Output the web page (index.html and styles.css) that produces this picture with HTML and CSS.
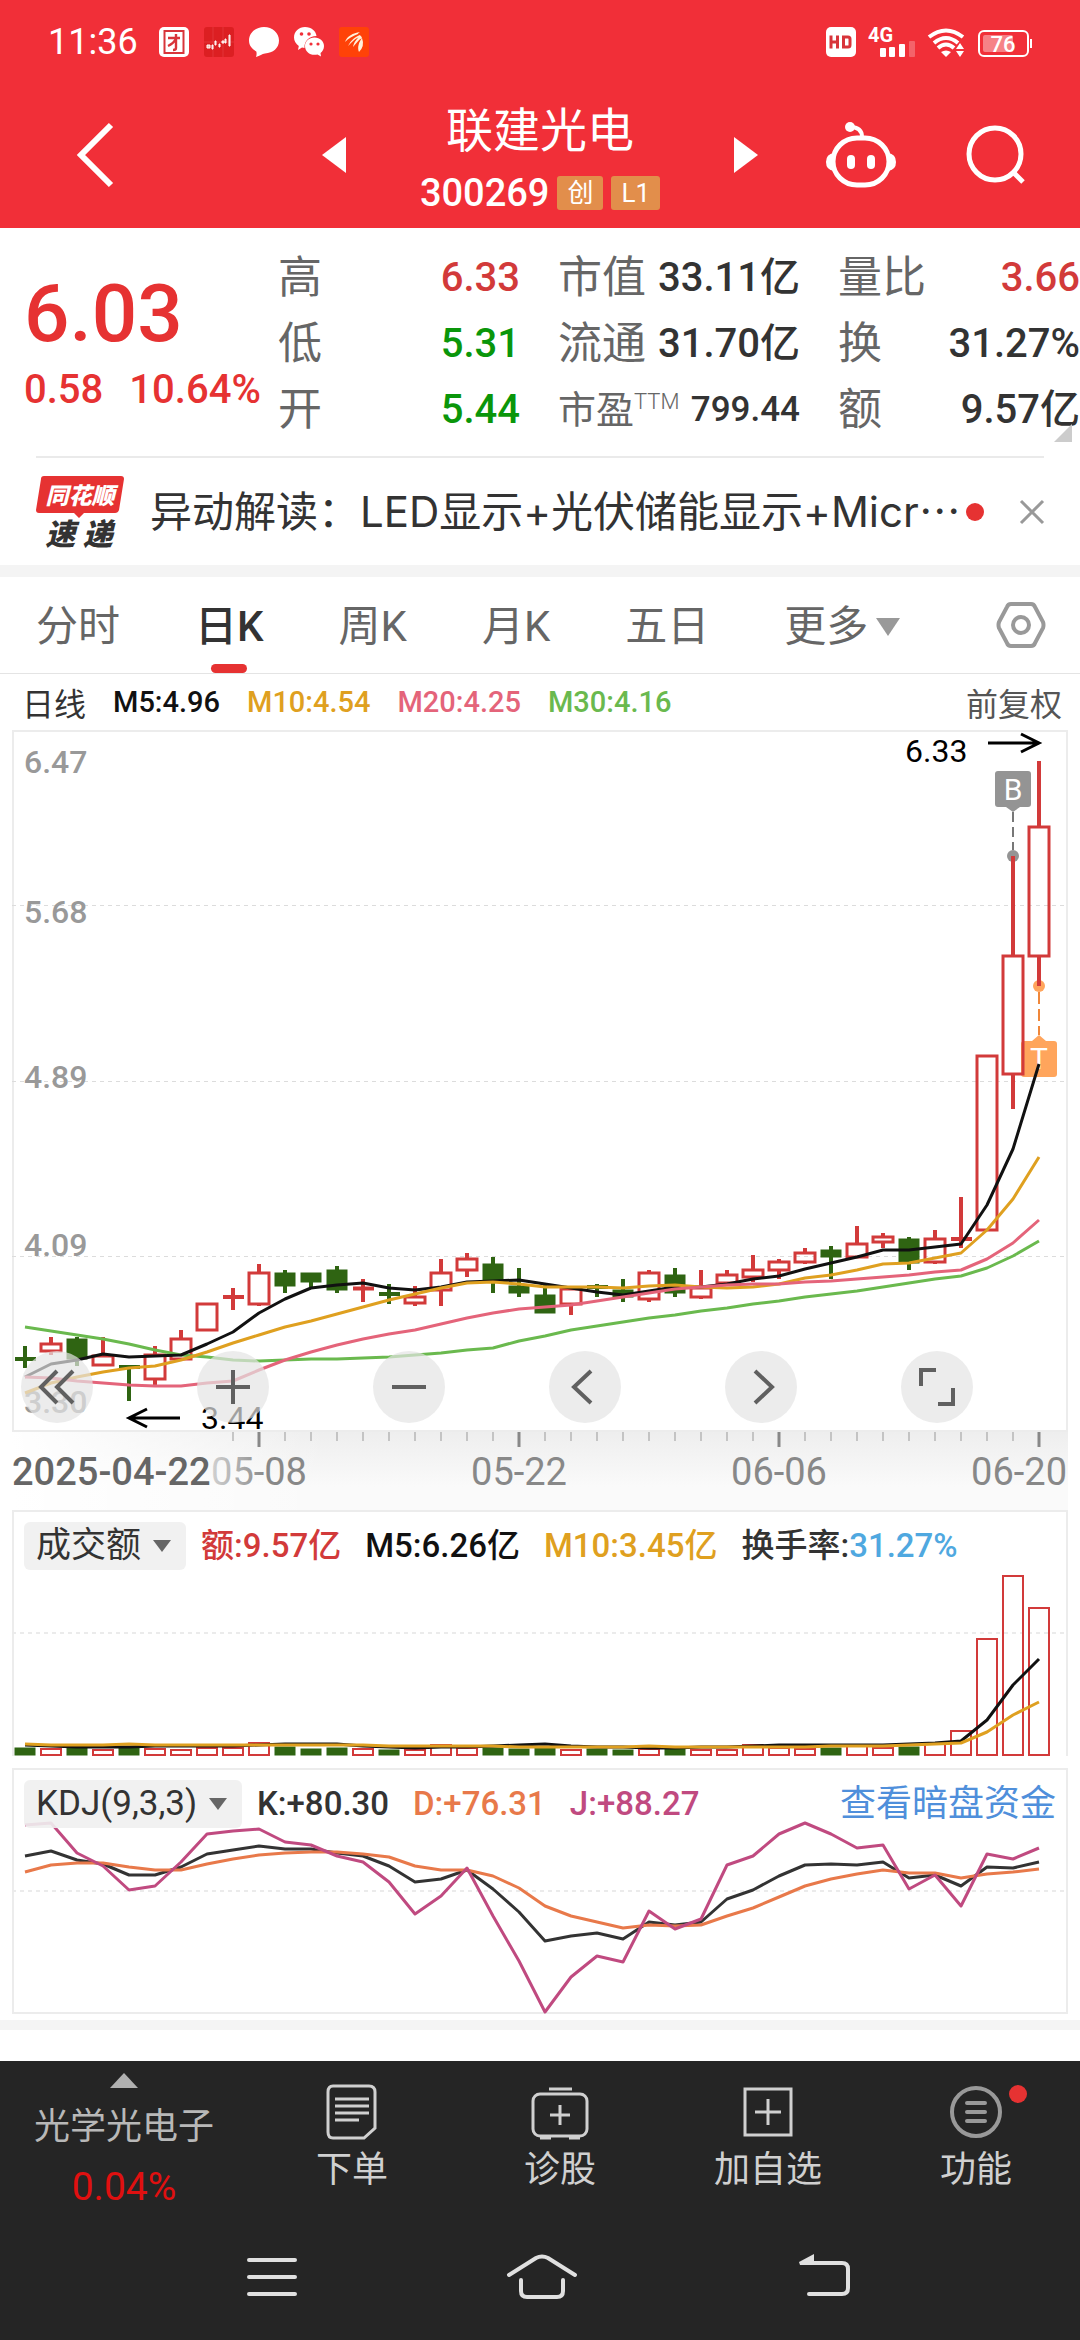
FILE: index.html
```html
<!DOCTYPE html>
<html lang="zh-CN">
<head>
  <meta charset="UTF-8">
  <meta name="viewport" content="width=device-width, initial-scale=1.0">
  <title>联建光电 300269</title>
  <link rel="stylesheet" href="styles.css">
</head>
<body>

  <header class="header">
    <div class="status-bar">
      <span class="clock">11:36</span>
      <svg class="status-icon" viewBox="0 0 30 30">
        <rect width="30" height="30" rx="5" fill="#fff"/>
        <rect x="5.500" y="4" width="19" height="22" fill="none" stroke="#d8343a" stroke-width="2"/>
        <path d="M9 11h12M17 7v14q0 2-3 2M17 12q-3 5-8 7" fill="none" stroke="#d8343a" stroke-width="2.400"/>
      </svg>
      <svg class="status-icon" viewBox="0 0 30 30">
        <rect width="30" height="30" rx="3" fill="#dc1f22"/>
        <path d="M9 0v30M19 0v30M0 15h30" stroke="#e23438" stroke-width="1"/>
        <path d="M3 18h3v3H3zM8 18h1v4H8zM11 14h1v4h-1zM15 17h1v3h-1zM18 14h2v2h-2zM21 12h1v4h-1zM25 8h1v11h-1z" fill="#f3b9a8" stroke="#fff" stroke-width="1"/>
      </svg>
      <svg class="status-icon" viewBox="0 0 30 30">
        <path d="M15 0c8.500 0 15 6 15 13.500S24 26 16 26.500c-3 .5-5 2-9 3.500.8-2 .7-4 .3-5.500C3 22 0 18.500 0 13.500 0 6 6.500 0 15 0z" fill="#fff"/>
      </svg>
      <svg class="status-icon" viewBox="0 0 30 30">
        <path d="M11 0c6.500 0 11 4 11.500 9C15 9 10 14 10.500 21L8 20.500 4 23l.8-4C2 17 0 14 0 10.500 0 4.500 5 0 11 0z" fill="#fff"/>
        <path d="M20.500 10.500c5.500 0 9.500 4 9.500 8.500 0 3-1.500 5.500-3.500 7l.5 3.500-3.500-2c-7 1.500-12.500-2.500-12.500-8.500 0-4.500 4-8.500 9.500-8.500z" fill="#fff"/>
        <g fill="#f12f38"><circle cx="7.500" cy="7" r="1.800"/><circle cx="15" cy="7" r="1.800"/><circle cx="17" cy="17" r="1.600"/><circle cx="24" cy="17" r="1.600"/></g>
      </svg>
      <svg class="status-icon" viewBox="0 0 30 30">
        <rect width="30" height="30" rx="3" fill="#ff4208"/>
        <path d="M6 15C8 9 14 6 21 5q-2 1-2 2c-5 2-9 4-13 8zM9 19c3-6 7-9 12-11q1 1 .5 2c-6 1-8 5-12.500 9zM14 20c1-5 4-9 8-11l1 2c-4 2-6 6-9 9zM20 25c-2-5 0-10 3-14q3 8-3 14z" fill="#fff3dc"/>
      </svg>
      <div class="status-right">
        <svg class="status-icon" viewBox="0 0 30 30">
          <rect width="30" height="30" rx="5" fill="#fff"/>
          <path d="M5 8.500v13M11.500 8.500v13M5 15h6.500M17.500 10v10h4.500q2 0 2-2v-6q0-2-2-2z" fill="none" stroke="#d8343a" stroke-width="3"/>
        </svg>
        <svg class="signal-icon" viewBox="0 0 48 30">
          <text class="signal-text" x="0" y="15">4G</text>
          <g fill="#fff"><rect x="12" y="21" width="6" height="9" rx="1"/><rect x="21" y="20" width="6" height="10" rx="1"/><rect x="31" y="17" width="6" height="13" rx="1"/></g>
          <rect x="41" y="14" width="6" height="16" rx="1" fill="#fff" opacity=".25"/>
        </svg>
        <svg class="wifi-icon" viewBox="0 0 38 30">
          <g fill="none" stroke="#fff" stroke-width="4"><path d="M1 10Q18 -3 35 10"/><path d="M6 16Q18 6 30 16"/><path d="M10 21Q18 14 26 21"/></g>
          <path d="M13 25q5-3 10 0l-5 5z" fill="#fff"/>
          <path d="M28 22l4-6 4 6zM28 24h8l-4 6z" fill="#fff"/>
        </svg>
        <svg class="battery-icon" viewBox="0 0 54 30">
          <rect x="1" y="4" width="49" height="25" rx="5" fill="none" stroke="#fff" stroke-width="2"/>
          <rect x="5" y="8" width="30" height="17" rx="2" fill="#fff" opacity=".4"/>
          <rect x="52" y="12" width="2" height="9" fill="#fff"/>
          <text class="battery-text" x="25" y="25">76</text>
        </svg>
      </div>
    </div>

    <nav class="title-bar">
      <div class="title-left">
        <button class="icon-btn" aria-label="返回">
          <svg width="38" height="66" viewBox="0 0 38 66"><path d="M36 3L6 33l30 30" fill="none" stroke="#fff" stroke-width="6"/></svg>
        </button>
      </div>
      <div class="stock">
        <button class="icon-btn" aria-label="上一只">
          <svg width="24" height="36" viewBox="0 0 24 36"><path d="M24 0v36L0 18z" fill="#fff"/></svg>
        </button>
        <div class="stock-title">
          <h1 class="stock-name">联建光电</h1>
          <div class="stock-code">300269 <span class="tag">创</span><span class="tag">L1</span></div>
        </div>
        <button class="icon-btn" aria-label="下一只">
          <svg width="24" height="36" viewBox="0 0 24 36"><path d="M0 0v36L24 18z" fill="#fff"/></svg>
        </button>
      </div>
      <div class="title-right">
        <button class="icon-btn" aria-label="助手">
          <svg width="70" height="66" viewBox="0 0 70 66">
            <rect x="7" y="16" width="56" height="47" rx="24" fill="none" stroke="#fff" stroke-width="5"/>
            <path d="M36 15C36 8 32 5 24 5" fill="none" stroke="#fff" stroke-width="4"/>
            <circle cx="24" cy="5" r="5" fill="#fff"/>
            <path d="M8 31q-8 1-8 9t8 9zM62 31q8 1 8 9t-8 9z" fill="#fff"/>
            <rect x="21" y="33" width="8" height="14" rx="4" fill="#fff"/><rect x="41" y="33" width="8" height="14" rx="4" fill="#fff"/>
          </svg>
        </button>
        <button class="icon-btn" aria-label="搜索">
          <svg width="60" height="60" viewBox="0 0 60 60"><circle cx="29" cy="29" r="26" fill="none" stroke="#fff" stroke-width="5"/><path d="M47 47l10 10" stroke="#fff" stroke-width="5"/></svg>
        </button>
      </div>
    </nav>
  </header>

  <main class="content">
    <section class="quote">
      <div class="price-block">
        <div class="price">6.03</div>
        <div class="change"><span>0.58</span><span>10.64%</span></div>
      </div>
      <dl class="stats">
        <div><dt>高</dt><dd class="up">6.33</dd></div>
        <div><dt>市值</dt><dd>33.11亿</dd></div>
        <div><dt>量比</dt><dd class="up">3.66</dd></div>
        <div><dt>低</dt><dd class="down">5.31</dd></div>
        <div><dt>流通</dt><dd>31.70亿</dd></div>
        <div><dt>换</dt><dd>31.27%</dd></div>
        <div><dt>开</dt><dd class="down">5.44</dd></div>
        <div class="small"><dt>市盈<sup>TTM</sup></dt><dd>799.44</dd></div>
        <div><dt>额</dt><dd>9.57亿</dd></div>
      </dl>
      <span class="corner"></span>
    </section>

    <section class="news">
      <svg class="news-logo" viewBox="0 0 88 74">
        <path d="M8 1h77q3 0 3 3l-5 31q-1 3-4 3H48l-5 5-5-5H3q-3 0-3-3L5 4q0-3 3-3z" fill="#e63232"/>
        <text class="logo-top" x="44" y="29">同花顺</text>
        <text class="logo-bottom" x="43" y="70">速 递</text>
      </svg>
      <a class="news-text" href="#">异动解读：LED显示+光伏储能显示+Micr⋯</a>
      <span class="red-dot"></span>
      <button class="icon-btn news-close" aria-label="关闭">
        <svg width="24" height="24" viewBox="0 0 24 24"><path d="M1 1l22 22M23 1L1 23" stroke="#999" stroke-width="3"/></svg>
      </button>
    </section>

    <nav class="tabs">
      <button class="tab">分时</button>
      <button class="tab active">日K</button>
      <button class="tab">周K</button>
      <button class="tab">月K</button>
      <button class="tab">五日</button>
      <button class="tab more">更多</button>
      <button class="icon-btn settings" aria-label="设置">
        <svg width="50" height="46" viewBox="0 0 50 46"><path d="M15 2h20q3 0 4 3l8 15q1 3 0 6l-8 15q-1 3-4 3H15q-3 0-4-3L3 26q-1-3 0-6l8-15q1-3 4-3z" fill="none" stroke="#999" stroke-width="4"/><circle cx="25" cy="23" r="8" fill="none" stroke="#999" stroke-width="4"/></svg>
      </button>
    </nav>

    <div class="ma-row">
      <span class="ma-title">日线</span>
      <span class="m5">M5:4.96</span>
      <span class="m10">M10:4.54</span>
      <span class="m20">M20:4.25</span>
      <span class="m30">M30:4.16</span>
      <button class="adjust">前复权</button>
    </div>

    <section class="charts">
      <div class="kline">
        <svg class="chart" viewBox="0 0 1056 702">
          <rect class="frame" x="1" y="1" width="1054" height="700"/>
          <path class="grid-line" d="M0 175.500H1056M0 351.500H1056M0 526.500H1056"/>
          <g class="y-label">
            <text x="12" y="43">6.47</text>
            <text x="12" y="193">5.68</text>
            <text x="12" y="358">4.89</text>
            <text x="12" y="526">4.09</text>
            <text x="12" y="683">3.30</text>
          </g>
          <!-- buy / trade markers -->
          <g>
            <path d="M1001 82v38" stroke="#777" stroke-width="2" stroke-dasharray="10 5"/>
            <circle cx="1001" cy="126" r="6" fill="#949494"/>
            <path d="M986 41h30q3 0 3 3v30q0 3-3 3h-8l-7 5-7-5h-8q-3 0-3-3V44q0-3 3-3z" fill="#949494"/>
            <text class="marker" x="1001" y="70">B</text>
            <path d="M1027 262v43" stroke="#f0873a" stroke-width="2" stroke-dasharray="12 5"/>
            <circle cx="1027" cy="256" r="6" fill="#ffa55c"/>
            <path d="M1012 311h8l7-6 7 6h8q3 0 3 3v30q0 3-3 3h-30q-3 0-3-3v-30q0-3 3-3z" fill="#ffa55c"/>
            <text class="marker" x="1027" y="339">T</text>
          </g>
          <g id="candles"></g>
          <g id="ma-lines"></g>
          <g class="note">
            <text x="893" y="32">6.33</text>
            <text x="189" y="699">3.44</text>
            <path d="M976 13h50M1009 4l18 9-18 9M168 688h-50M135 679l-18 9 18 9"/>
          </g>
        </svg>
        <div class="tools">
          <button class="tool" aria-label="最早"><svg viewBox="0 0 36 36"><path d="M18 2L2 18l16 16M34 2L18 18l16 16"/></svg></button>
          <button class="tool" aria-label="放大"><svg viewBox="0 0 36 36"><path d="M1 18h34M18 1v34"/></svg></button>
          <button class="tool" aria-label="缩小"><svg viewBox="0 0 36 36"><path d="M1 18h34"/></svg></button>
          <button class="tool" aria-label="左移"><svg viewBox="0 0 36 36"><path d="M24 2L7 18l17 16"/></svg></button>
          <button class="tool" aria-label="右移"><svg viewBox="0 0 36 36"><path d="M12 2l17 16-17 16"/></svg></button>
          <button class="tool" aria-label="全屏"><svg viewBox="0 0 36 36"><path d="M2 17V1h15M34 19v16H19"/></svg></button>
        </div>
      </div>

      <svg class="chart axis" viewBox="0 0 1056 78">
        <defs>
          <linearGradient id="fade" gradientUnits="userSpaceOnUse" x1="190" y1="0" x2="255" y2="0">
            <stop offset="0" stop-color="#ddd"/><stop offset="1" stop-color="#888"/>
          </linearGradient>
        </defs>
        <g id="ticks"></g>
        <text class="date first" x="0" y="53">2025-04-22</text>
        <text class="date mid faded" x="247" y="53">05-08</text>
        <text class="date mid" x="507" y="53">05-22</text>
        <text class="date mid" x="767" y="53">06-06</text>
        <text class="date end" x="1055" y="53">06-20</text>
      </svg>

      <div class="panel">
        <svg class="chart" viewBox="0 0 1056 246">
          <path class="frame" d="M1 246V1h1054v245"/>
          <path class="grid-line soft" d="M0 123H1056"/>
          <g id="volumes"></g>
          <g id="volume-lines"></g>
        </svg>
        <div class="panel-head">
          <label class="picker"><select aria-label="指标"><option>成交额</option></select></label>
          <span class="up">额:9.57亿</span>
          <span class="m5">M5:6.26亿</span>
          <span class="m10">M10:3.45亿</span>
          <span class="dark">换手率:<span class="blue">31.27%</span></span>
        </div>
      </div>

      <div class="panel kdj">
        <svg class="chart" viewBox="0 0 1056 246">
          <rect class="frame" x="1" y="1" width="1054" height="244"/>
          <path class="grid-line soft" d="M0 123H1056"/>
          <g id="kdj-lines"></g>
        </svg>
        <div class="panel-head">
          <label class="picker"><select aria-label="指标"><option>KDJ(9,3,3)</option></select></label>
          <span class="dark">K:+80.30</span>
          <span class="d-line">D:+76.31</span>
          <span class="j-line">J:+88.27</span>
          <a class="fund-link" href="#">查看暗盘资金</a>
        </div>
      </div>
    </section>
    <div class="band"></div>
  </main>

  <footer class="footer">
    <div class="actions">
      <button class="sector">
        <svg width="28" height="15" viewBox="0 0 28 15"><path d="M14 0l14 15H0z" fill="#b0b0b0"/></svg>
        <span class="sector-name">光学光电子</span>
        <span class="sector-rate">0.04%</span>
      </button>
      <button class="action">
        <svg width="58" height="56" viewBox="0 0 58 56" fill="none" stroke="#d0d0d0">
          <path d="M10 2h36q6 0 6 6v36L41 54H10q-5 0-5-6V8q0-6 5-6z" stroke-width="3"/>
          <path d="M12 15h34M12 22h34M12 29h34M12 36h24" stroke-width="3"/>
        </svg>
        下单
      </button>
      <button class="action">
        <svg width="58" height="56" viewBox="0 0 58 56" fill="none" stroke="#d0d0d0">
          <rect x="2" y="10" width="54" height="42" rx="7" stroke-width="3"/>
          <path d="M18 5h23M9 54h11M38 54h11" stroke-width="3"/>
          <path d="M29 21v20M19 31h20" stroke-width="3"/>
        </svg>
        诊股
      </button>
      <button class="action">
        <svg width="58" height="56" viewBox="0 0 58 56" fill="none" stroke="#d0d0d0" stroke-width="3">
          <rect x="6" y="5" width="46" height="46"/>
          <path d="M29 15v26M16 28h26"/>
        </svg>
        加自选
      </button>
      <button class="action">
        <svg width="58" height="56" viewBox="0 0 58 56" fill="none" stroke="#999" stroke-width="4">
          <circle cx="29" cy="28" r="24"/>
          <path d="M20 19h18M20 28h18M20 37h18" stroke-linecap="round"/>
        </svg>
        功能
        <span class="red-dot badge"></span>
      </button>
    </div>
    <div class="system-nav">
      <button class="icon-btn" aria-label="最近任务"><svg width="66" height="46" viewBox="0 0 66 46"><path d="M18 6h46M18 23h46M18 40h46" stroke="#e0e0e0" stroke-width="4" stroke-linecap="round"/></svg></button>
      <button class="icon-btn" aria-label="主屏幕"><svg width="70" height="46" viewBox="0 0 70 46"><path d="M2 21L29 4q6-3 12 0L68 21M14 26v11q0 6 6 6h30q6 0 6-6V26" fill="none" stroke="#e0e0e0" stroke-width="4" stroke-linecap="round"/></svg></button>
      <button class="icon-btn" aria-label="返回桌面"><svg width="63" height="46" viewBox="0 0 63 46"><path d="M22 40h33q6 0 6-6V15q0-6-6-6H20" fill="none" stroke="#e0e0e0" stroke-width="4" stroke-linecap="round"/><path d="M12 8L27 0v11H13z" fill="#e0e0e0"/></svg></button>
    </div>
  </footer>

  <script src="script.js"></script>
</body>
</html>
```
FILE: styles.css
```css
* {
  box-sizing: border-box;
}

body {
  margin: 0;
  min-height: 100vh;
  display: flex;
  flex-direction: column;
  background: #fff;
  color: #333;
  font-family: Roboto, "Noto Sans CJK SC", sans-serif;
}

button, select {
  margin: 0;
  padding: 0;
  border: none;
  background: none;
  color: inherit;
  font: inherit;
  cursor: pointer;
}

a {
  color: inherit;
  text-decoration: none;
}

svg {
  display: block;
  overflow: visible;
}

.icon-btn {
  display: flex;
}

/* Header */
.header {
  background: #f12f38;
  color: #fff;
}

.status-bar {
  display: flex;
  align-items: center;
  gap: 15px;
  height: 84px;
  padding: 0 48px;
}

.clock {
  margin-right: 6px;
  font-size: 36px;
  line-height: 40px;
}

.status-icon {
  width: 30px;
  height: 30px;
}

.status-right {
  display: flex;
  gap: 12px;
  margin-left: auto;
}

.signal-icon {
  width: 48px;
  height: 30px;
}

.wifi-icon {
  width: 38px;
  height: 30px;
}

.battery-icon {
  width: 54px;
  height: 30px;
}

.signal-text {
  font-size: 20px;
  font-weight: 700;
  fill: #fff;
}

.battery-text {
  font-size: 22px;
  font-weight: 500;
  fill: #fff;
  text-anchor: middle;
}

.title-bar {
  display: grid;
  grid-template-columns: 1fr auto 1fr;
  align-items: center;
  height: 144px;
  padding-bottom: 2px;
}

.title-left {
  padding-left: 75px;
}

.title-right {
  display: flex;
  justify-content: flex-end;
  align-items: center;
  gap: 70px;
  padding-right: 54px;
}

.stock {
  display: flex;
  align-items: center;
  gap: 74px;
}

.stock-title {
  padding-top: 8px;
  text-align: center;
}

.stock-name {
  margin: 0;
  font-size: 47px;
  font-weight: 400;
  line-height: 68px;
}

.stock-code {
  display: flex;
  align-items: center;
  gap: 8px;
  font-size: 38px;
  font-weight: 500;
  line-height: 56px;
}

.tag {
  min-width: 45px;
  padding: 0 10px;
  border-radius: 3px;
  background: #e28e4b;
  font-size: 26px;
  font-weight: 400;
  line-height: 34px;
}

/* Quote */
.quote {
  position: relative;
  display: flex;
  justify-content: space-between;
  padding: 17px 0 13px 24px;
}

.price-block {
  color: #e63232;
  font-weight: 500;
}

.price {
  padding-top: 20px;
  font-size: 80px;
  line-height: 98px;
}

.change {
  display: flex;
  gap: 26px;
  font-size: 40px;
  line-height: 54px;
}

.stats {
  display: grid;
  grid-template-columns: repeat(3, 242px);
  column-gap: 38px;
  margin: 0;
  font-size: 44px;
  line-height: 66px;
}

.stats div {
  display: flex;
  justify-content: space-between;
  white-space: nowrap;
}

.stats dt {
  color: #666;
}

.stats dd {
  margin: 0;
  font-size: 40px;
  font-weight: 500;
}

.stats .small dt {
  font-size: 38px;
}

.stats .small dd {
  font-size: 35px;
}

.stats sup {
  font-size: 22px;
  font-weight: 300;
  line-height: 0;
}

.up {
  color: #d23a3a;
}

.down {
  color: #0a960a;
}

.corner {
  position: absolute;
  right: 8px;
  bottom: 14px;
  border-left: 18px solid transparent;
  border-bottom: 18px solid #ccc;
}

/* News strip */
.news {
  display: flex;
  align-items: center;
  height: 109px;
  margin: 0 36px;
  border-top: 2px solid #eaeaea;
}

.news-logo {
  width: 88px;
  height: 74px;
}

.logo-top, .logo-bottom {
  font-style: italic;
  font-weight: 900;
  text-anchor: middle;
}

.logo-top {
  font-size: 23px;
  fill: #fff;
}

.logo-bottom {
  font-size: 30px;
  fill: #333;
}

.news-text {
  flex: 1;
  margin-left: 26px;
  font-family: Inter, "Noto Sans CJK SC", sans-serif;
  font-size: 42px;
  line-height: 60px;
  white-space: nowrap;
}

.red-dot {
  width: 18px;
  height: 18px;
  border-radius: 50%;
  background: #e63232;
}

.news-close {
  margin-left: 36px;
}

/* Tabs */
.tabs {
  display: flex;
  align-items: center;
  gap: 75px;
  height: 109px;
  padding: 0 34px 0 36px;
  border-top: 12px solid #f4f4f4;
  border-bottom: 1px solid #e4e4e4;
  color: #666;
}

.tab {
  position: relative;
  padding-top: 4px;
  font-size: 42px;
  line-height: 92px;
}

.tab.active {
  color: #333;
  font-weight: 500;
}

.tab.active::after {
  content: "";
  position: absolute;
  left: 50%;
  bottom: 0;
  width: 36px;
  height: 9px;
  margin-left: -18px;
  border-radius: 5px;
  background: #e63232;
}

.tab.more {
  display: flex;
  align-items: center;
  gap: 8px;
}

.tab.more::after {
  content: "";
  border: 12px solid transparent;
  border-top: 18px solid #999;
  border-bottom: none;
}

.settings {
  margin-left: auto;
}

/* MA legend */
.ma-row {
  display: flex;
  align-items: center;
  gap: 27px;
  height: 56px;
  padding: 0 18px 0 22px;
  font-size: 29px;
  font-weight: 500;
}

.ma-title, .adjust {
  font-size: 32px;
  font-weight: 400;
}

.adjust {
  margin-left: auto;
  color: #555;
}

.m5 {
  color: #111;
}

.m10 {
  color: #dfa020;
}

.m20 {
  color: #e4647a;
}

.m30 {
  color: #6ab94e;
}

/* Charts */
.charts {
  padding: 0 12px;
}

.chart {
  width: 100%;
}

.kline, .panel {
  position: relative;
}

.frame {
  fill: none;
  stroke: #ececec;
  stroke-width: 2;
}

.grid-line {
  fill: none;
  stroke: #dcdcdc;
  stroke-width: 1;
  stroke-dasharray: 4 4;
}

.grid-line.soft {
  stroke: #ebebeb;
  stroke-width: 2;
}

.y-label {
  font-size: 32px;
  font-weight: 500;
  fill: #999;
}

.marker {
  font-size: 30px;
  fill: #fff;
  text-anchor: middle;
}

.note {
  font-size: 32px;
}

.note path {
  fill: none;
  stroke: #000;
  stroke-width: 3;
}

.bar-up {
  fill: none;
  stroke: #d23a3a;
  stroke-width: 3;
}

.bar-up.thin {
  stroke-width: 2;
}

.bar-down {
  fill: #2f6412;
  stroke: #2f6412;
}

.wick {
  stroke-width: 4;
}

.line {
  fill: none;
  stroke-width: 3;
  stroke-linejoin: round;
}

.tools {
  position: absolute;
  left: 9px;
  bottom: 9px;
  display: flex;
  gap: 104px;
}

.tool {
  display: flex;
  align-items: center;
  justify-content: center;
  width: 72px;
  height: 72px;
  border-radius: 50%;
  background: rgba(228, 228, 228, 0.7);
}

.tool svg {
  width: 36px;
  height: 36px;
  fill: none;
  stroke: #606060;
  stroke-width: 4;
}

.axis {
  background: linear-gradient(90deg, #fff, rgba(255, 255, 255, 0) 30%), linear-gradient(#eeeeee, #fafafa 70%);
}

.tick {
  stroke: #999;
  stroke-width: 1;
}

.tick.major {
  stroke: #888;
  stroke-width: 3;
}

.date {
  font-size: 38px;
  fill: #888;
}

.date.first {
  font-weight: 500;
  fill: #666;
}

.date.mid {
  text-anchor: middle;
}

.date.faded {
  fill: url(#fade);
}

.date.end {
  text-anchor: end;
}

.panel-head {
  position: absolute;
  top: 12px;
  left: 12px;
  right: 12px;
  display: flex;
  align-items: center;
  gap: 24px;
  font-size: 33px;
  font-weight: 500;
  line-height: 48px;
  white-space: nowrap;
}

.picker {
  position: relative;
  margin-right: -9px;
  border-radius: 6px;
  background: rgba(240, 240, 240, 0.9);
}

.picker select {
  display: block;
  appearance: none;
  height: 48px;
  padding: 0 44px 0 12px;
  font-size: 35px;
  font-weight: 400;
}

.picker::after {
  content: "";
  position: absolute;
  top: 18px;
  right: 15px;
  border: 9px solid transparent;
  border-top: 12px solid #666;
  border-bottom: none;
  pointer-events: none;
}

.kdj {
  margin-top: 12px;
}

.dark {
  color: #333;
}

.blue {
  color: #4fa8e0;
}

.d-line {
  color: #e8794a;
}

.j-line {
  color: #c04a80;
}

.fund-link {
  margin-left: auto;
  color: #4f8fdb;
  font-size: 36px;
  font-weight: 400;
}

.content {
  flex: 1;
}

.band {
  height: 10px;
  margin: 6px 0 31px;
  background: #f4f4f4;
}

/* Footer */
.footer {
  background: #252525;
  color: #d0d0d0;
}

.actions {
  display: grid;
  grid-template-columns: 31fr 26fr 26fr 26fr 26fr;
  align-items: start;
}

.sector, .action {
  position: relative;
  display: flex;
  flex-direction: column;
  align-items: center;
  font-size: 36px;
}

.sector {
  padding-top: 12px;
}

.sector-name {
  padding-top: 14px;
  color: #b8b8b8;
  line-height: 50px;
}

.sector-rate {
  padding-top: 8px;
  color: #e01010;
  font-size: 39px;
  line-height: 54px;
}

.action {
  padding-top: 23px;
  line-height: 60px;
}

.badge {
  position: absolute;
  top: 24px;
  right: 53px;
}

.system-nav {
  display: flex;
  justify-content: center;
  gap: 210px;
  padding: 40px 0;
}
```
FILE: script.js
```js
// 40 daily bars: [bodyTop, bodyBottom, high, low, up]
const bars = [
  [629, 629, 616, 638, 0], [614, 621, 607, 625, 1], [609, 629, 607, 636, 0], [626, 635, 607, 636, 1],
  [637, 637, 637, 671, 0], [625, 649, 616, 656, 1], [609, 629, 600, 630, 1], [574, 600, 574, 600, 1],
  [567, 567, 558, 580, 1], [543, 574, 534, 576, 1], [543, 556, 540, 563, 0], [543, 552, 543, 558, 0],
  [540, 560, 536, 563, 0], [557, 560, 549, 572, 1], [564, 564, 554, 574, 0], [567, 573, 556, 576, 1],
  [543, 560, 529, 576, 1], [529, 540, 523, 547, 1], [534, 550, 527, 563, 0], [556, 563, 538, 567, 0],
  [565, 583, 554, 583, 0], [559, 574, 559, 585, 1], [557, 557, 554, 567, 0], [560, 567, 549, 572, 0],
  [543, 569, 540, 572, 1], [545, 563, 538, 567, 0], [558, 567, 540, 569, 1], [545, 553, 540, 553, 1],
  [540, 547, 525, 552, 1], [532, 540, 529, 549, 1], [523, 532, 518, 534, 1], [520, 527, 516, 549, 0],
  [514, 527, 496, 527, 1], [507, 512, 503, 518, 1], [509, 533, 507, 540, 0], [509, 532, 500, 534, 1],
  [509, 509, 467, 518, 1], [326, 500, 326, 500, 1], [226, 344, 126, 379, 1], [97, 226, 31, 256, 1]
];

const ma = {
  "#6ab94e": [597, 601, 605, 609, 614, 620, 625, 627, 630, 631, 630, 629, 629, 628, 627, 625, 623, 620, 618, 611, 606, 600, 596, 592, 588, 585, 581, 578, 574, 571, 567, 564, 561, 557, 553, 549, 546, 538, 526, 511],
  "#111111": [647, 634, 630, 624, 627, 626, 625, 614, 602, 583, 569, 558, 555, 553, 558, 560, 557, 552, 551, 550, 554, 558, 562, 565, 561, 557, 557, 554, 549, 546, 539, 533, 527, 520, 520, 517, 514, 475, 419, 334],
  "#dfa020": [663, 653, 647, 642, 638, 636, 630, 622, 613, 605, 597, 591, 584, 577, 570, 564, 558, 553, 552, 554, 557, 557, 557, 558, 556, 555, 557, 558, 557, 554, 548, 545, 540, 534, 533, 528, 523, 500, 469, 427],
  "#e4647a": [647, 648, 651, 653, 655, 656, 656, 653, 651, 640, 630, 622, 615, 609, 604, 600, 594, 588, 583, 579, 577, 575, 571, 567, 563, 559, 557, 555, 554, 554, 552, 551, 549, 547, 545, 542, 540, 529, 513, 490]
};

const volumes = [238, 239, 238, 240, 238, 239, 240, 238, 238, 233, 237, 239, 238, 239, 240, 240, 235, 238, 238, 239, 238, 240, 239, 240, 239, 239, 240, 240, 235, 238, 239, 238, 235, 238, 237, 234, 221, 129, 66, 98];

const volumeMa = {
  "#111111": [235, 236, 237, 237, 237, 236, 236, 236, 236, 235, 234, 234, 234, 236, 237, 238, 237, 237, 236, 235, 234, 236, 237, 237, 238, 238, 237, 237, 236, 235, 235, 235, 235, 235, 234, 233, 231, 210, 175, 149],
  "#dfa020": [234, 235, 235, 235, 234, 235, 235, 235, 235, 235, 235, 235, 235, 235, 236, 236, 236, 236, 236, 237, 237, 237, 237, 237, 236, 237, 237, 237, 237, 237, 237, 236, 236, 236, 235, 234, 233, 222, 205, 192]
};

const kdj = {
  "#333333": [88, 83, 92, 96, 107, 107, 99, 86, 82, 78, 81, 81, 85, 88, 98, 114, 111, 102, 121, 144, 173, 168, 165, 171, 154, 157, 154, 131, 122, 108, 97, 96, 97, 94, 110, 107, 118, 99, 100, 94],
  "#e8794a": [104, 97, 95, 95, 99, 102, 102, 96, 91, 87, 85, 84, 84, 86, 89, 98, 102, 102, 108, 120, 138, 148, 154, 160, 157, 158, 157, 148, 140, 129, 118, 111, 106, 102, 105, 105, 110, 106, 104, 101],
  "#c04a80": [57, 55, 85, 98, 122, 118, 94, 66, 63, 61, 74, 77, 88, 94, 114, 146, 128, 100, 148, 193, 244, 209, 188, 194, 143, 161, 151, 97, 88, 66, 55, 66, 80, 77, 121, 107, 138, 86, 91, 80]
};

const STEP = 26;
const x = i => 13 + i * STEP;

function drawCandles() {
  document.getElementById("candles").innerHTML = bars.map(([top, bottom, high, low, up], i) => {
    const cls = up ? "bar-up" : "bar-down";
    if (bottom - top < 4) {
      // open and close almost equal
      return `<path class="${cls} wick" d="M${x(i) - 10} ${(top + bottom) / 2}h21M${x(i)} ${high}V${low}"/>`;
    }
    const wick = `<path class="${cls} wick" d="M${x(i)} ${high}V${top}M${x(i)} ${bottom}V${low}"/>`;
    return wick + `<rect class="${cls}" x="${x(i) - 10}" y="${top}" width="20" height="${bottom - top}"/>`;
  }).join("");
}

function drawVolumes() {
  document.getElementById("volumes").innerHTML = volumes.map((top, i) =>
    `<rect class="${bars[i][4] ? "bar-up thin" : "bar-down"}" x="${x(i) - 10}" y="${top}" width="20" height="${245 - top}"/>`
  ).join("");
}

function drawLines(id, series) {
  document.getElementById(id).innerHTML = Object.entries(series).map(([color, ys]) =>
    `<polyline class="line" stroke="${color}" points="${ys.map((y, i) => `${x(i)},${y}`).join(" ")}"/>`
  ).join("");
}

function drawTicks() {
  let ticks = "";
  for (let i = 8; i < bars.length; i++) {
    const major = i % 10 === 9;
    ticks += `<path class="tick${major ? " major" : ""}" d="M${x(i)} 0v${major ? 15 : 9}"/>`;
  }
  document.getElementById("ticks").innerHTML = ticks;
}

drawCandles();
drawVolumes();
drawTicks();
drawLines("ma-lines", ma);
drawLines("volume-lines", volumeMa);
drawLines("kdj-lines", kdj);
```
